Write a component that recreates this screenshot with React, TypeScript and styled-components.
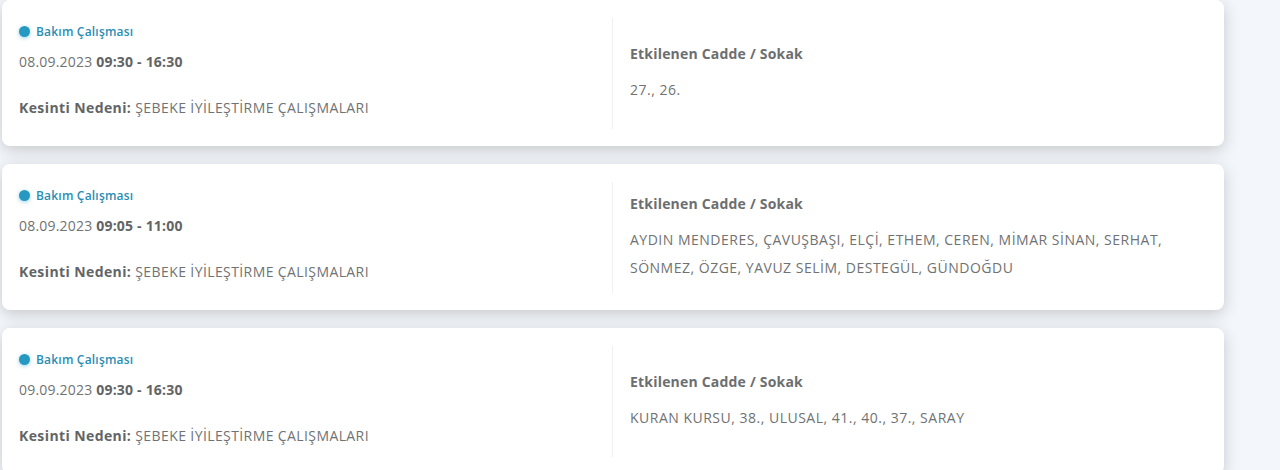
import styled, { createGlobalStyle } from "styled-components";

const GlobalStyle = createGlobalStyle`
  html, body {
    margin: 0;
    padding: 0;
    background: #f3f6fa;
    font-family: "Open Sans", "Liberation Sans", sans-serif;
  }
`;

const List = styled.div`
  display: flex;
  flex-direction: column;
  gap: 18px;
  width: 1222px;
  padding-left: 2px;
`;

const Card = styled.div`
  display: grid;
  grid-template-columns: 610px 1fr;
  height: 146px;
  background: #ffffff;
  border-radius: 8px;
  box-shadow: 0 4px 16px rgba(0, 0, 0, 0.19);
`;

const Left = styled.div`
  display: flex;
  flex-direction: column;
  align-items: flex-start;
  padding: 23px 17px 0;
`;

const Tag = styled.div`
  display: flex;
  align-items: center;
  gap: 6px;
  height: 16px;
  font-size: 12px;
  font-weight: 600;
  letter-spacing: 0.2px;
  color: #2a8db3;
`;

const Dot = styled.span`
  width: 11px;
  height: 11px;
  border-radius: 50%;
  background: #2699c3;
  box-shadow: 0 1px 4px rgba(38, 153, 195, 0.45);
`;

const DateLine = styled.div`
  margin-top: 13px;
  line-height: 20px;
  font-size: 14px;
  letter-spacing: 0.2px;
  color: #707273;
  b {
    font-weight: 700;
    color: #626465;
  }
`;

const Reason = styled.div`
  margin-top: 26px;
  line-height: 20px;
  font-size: 14px;
  letter-spacing: 0.4px;
  color: #707273;
  b {
    font-weight: 700;
    color: #626465;
  }
`;

const Right = styled.div`
  display: flex;
  flex-direction: column;
  justify-content: center;
  margin: 18px 0 17px;
  padding: 0 40px 0 17px;
  border-left: 1px solid #f0f0f0;
`;

const Heading = styled.div`
  line-height: 20px;
  font-size: 14px;
  font-weight: 700;
  letter-spacing: 0.2px;
  color: #6c6e6f;
`;

const Streets = styled.div`
  margin-top: 12px;
  line-height: 28px;
  font-size: 14px;
  letter-spacing: 0.5px;
  color: #707273;
`;

type Outage = {
  date: string;
  time: string;
  reason: string;
  streets: string;
};

const outages: Outage[] = [
  {
    date: "08.09.2023",
    time: "09:30 - 16:30",
    reason: "ŞEBEKE İYİLEŞTİRME ÇALIŞMALARI",
    streets: "27., 26.",
  },
  {
    date: "08.09.2023",
    time: "09:05 - 11:00",
    reason: "ŞEBEKE İYİLEŞTİRME ÇALIŞMALARI",
    streets:
      "AYDIN MENDERES, ÇAVUŞBAŞI, ELÇİ, ETHEM, CEREN, MİMAR SİNAN, SERHAT, SÖNMEZ, ÖZGE, YAVUZ SELİM, DESTEGÜL, GÜNDOĞDU",
  },
  {
    date: "09.09.2023",
    time: "09:30 - 16:30",
    reason: "ŞEBEKE İYİLEŞTİRME ÇALIŞMALARI",
    streets: "KURAN KURSU, 38., ULUSAL, 41., 40., 37., SARAY",
  },
];

const App = () => {
  return (
    <>
      <GlobalStyle />
      <List>
        {outages.map((o, i) => (
          <Card key={i}>
            <Left>
              <Tag>
                <Dot />
                Bakım Çalışması
              </Tag>
              <DateLine>
                {o.date} <b>{o.time}</b>
              </DateLine>
              <Reason>
                <b>Kesinti Nedeni:</b> {o.reason}
              </Reason>
            </Left>
            <Right>
              <Heading>Etkilenen Cadde / Sokak</Heading>
              <Streets>{o.streets}</Streets>
            </Right>
          </Card>
        ))}
      </List>
    </>
  );
};

export default App;
